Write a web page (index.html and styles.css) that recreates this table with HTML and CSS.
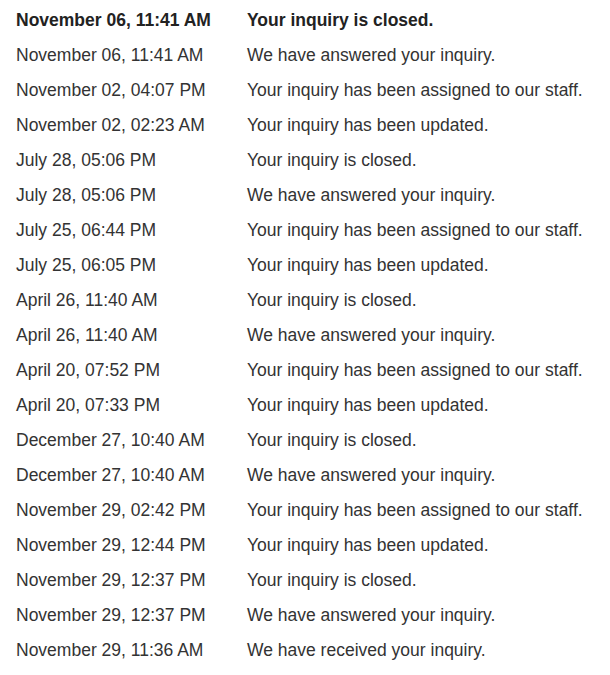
FILE: index.html
```html
<!DOCTYPE html>
<html>
<head>
<meta charset="utf-8">
<link rel="stylesheet" href="styles.css">
</head>
<body>
<div class="history">
  <div class="row current"><span class="date">November 06, 11:41 AM</span><span class="status">Your inquiry is closed.</span></div>
  <div class="row"><span class="date">November 06, 11:41 AM</span><span class="status">We have answered your inquiry.</span></div>
  <div class="row"><span class="date">November 02, 04:07 PM</span><span class="status">Your inquiry has been assigned to our staff.</span></div>
  <div class="row"><span class="date">November 02, 02:23 AM</span><span class="status">Your inquiry has been updated.</span></div>
  <div class="row"><span class="date">July 28, 05:06 PM</span><span class="status">Your inquiry is closed.</span></div>
  <div class="row"><span class="date">July 28, 05:06 PM</span><span class="status">We have answered your inquiry.</span></div>
  <div class="row"><span class="date">July 25, 06:44 PM</span><span class="status">Your inquiry has been assigned to our staff.</span></div>
  <div class="row"><span class="date">July 25, 06:05 PM</span><span class="status">Your inquiry has been updated.</span></div>
  <div class="row"><span class="date">April 26, 11:40 AM</span><span class="status">Your inquiry is closed.</span></div>
  <div class="row"><span class="date">April 26, 11:40 AM</span><span class="status">We have answered your inquiry.</span></div>
  <div class="row"><span class="date">April 20, 07:52 PM</span><span class="status">Your inquiry has been assigned to our staff.</span></div>
  <div class="row"><span class="date">April 20, 07:33 PM</span><span class="status">Your inquiry has been updated.</span></div>
  <div class="row"><span class="date">December 27, 10:40 AM</span><span class="status">Your inquiry is closed.</span></div>
  <div class="row"><span class="date">December 27, 10:40 AM</span><span class="status">We have answered your inquiry.</span></div>
  <div class="row"><span class="date">November 29, 02:42 PM</span><span class="status">Your inquiry has been assigned to our staff.</span></div>
  <div class="row"><span class="date">November 29, 12:44 PM</span><span class="status">Your inquiry has been updated.</span></div>
  <div class="row"><span class="date">November 29, 12:37 PM</span><span class="status">Your inquiry is closed.</span></div>
  <div class="row"><span class="date">November 29, 12:37 PM</span><span class="status">We have answered your inquiry.</span></div>
  <div class="row"><span class="date">November 29, 11:36 AM</span><span class="status">We have received your inquiry.</span></div>
</div>
</body>
</html>
```
FILE: styles.css
```css
html, body {
  margin: 0;
  padding: 0;
  background: #ffffff;
}
body {
  font-family: "Liberation Sans", Arial, sans-serif;
  font-size: 17.5px;
  color: #333333;
}
.history {
  padding: 3px 0 0 16px;
  display: flex;
  flex-direction: column;
}
.row {
  display: grid;
  grid-template-columns: 231px auto;
  height: 35px;
  line-height: 35px;
  white-space: nowrap;
}
.row.current {
  font-weight: bold;
  color: #222222;
}
```
